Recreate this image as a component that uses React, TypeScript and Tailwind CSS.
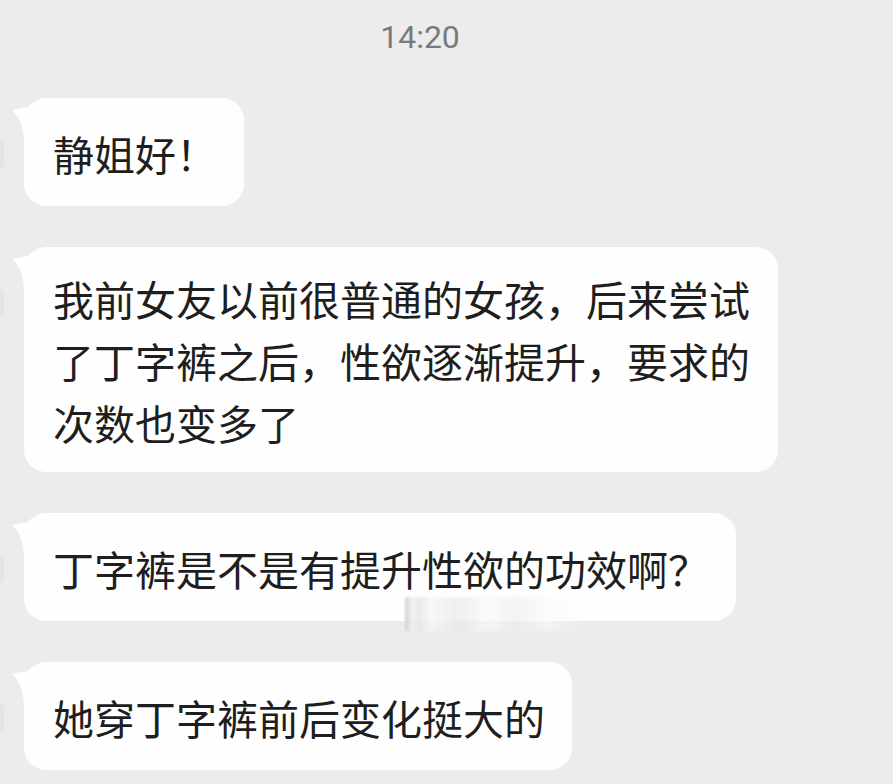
const messages = [
  { id: 1, text: '静姐好！' },
  { id: 2, text: '我前女友以前很普通的女孩，后来尝试了丁字裤之后，性欲逐渐提升，要求的次数也变多了' },
  { id: 3, text: '丁字裤是不是有提升性欲的功效啊？', smudge: true },
  { id: 4, text: '她穿丁字裤前后变化挺大的' },
];

function Tail() {
  return (
    <svg
      className="absolute left-[-12px] top-[8px]"
      width="22"
      height="36"
      viewBox="0 0 22 36"
    >
      <path d="M22 0 L3 3.2 Q0 3.8 1.5 6 Q11 14 12 36 L22 36 Z" fill="#fefefe" />
    </svg>
  );
}

function Bubble({ text, smudge }: { text: string; smudge?: boolean }) {
  return (
    <div className="relative">
      {/* avatar edge peeking in from the left */}
      <span className="absolute left-[-24px] top-[42px] h-[28px] w-[4px] rounded-r-full bg-[#e4dfd6] opacity-70 blur-[1px]" />
      <Tail />
      <div className="flex min-h-[108px] max-w-[754px] items-center rounded-[22px] bg-[#fefefe] pl-[29px] pr-[27px] pt-[20px] pb-[19px] text-[41px] leading-[62px] text-[#1e1e1e]">
        <p>{text}</p>
      </div>
      {smudge && (
        <div className="absolute left-[381px] top-[84px] h-[34px] w-[180px] bg-[linear-gradient(90deg,rgba(205,205,205,0.9)_0%,rgba(240,240,240,0.9)_4%,rgba(228,228,228,0.8)_8%,rgba(246,246,246,0.8)_14%,rgba(232,232,232,0.7)_30%,rgba(248,248,248,0.7)_45%,rgba(236,236,236,0.6)_62%,rgba(250,250,250,0.5)_80%,rgba(250,250,250,0)_100%)] blur-[1px]" />
      )}
    </div>
  );
}

export default function App() {
  return (
    <div className="min-h-screen w-full overflow-hidden bg-[#ececec] font-['Noto_Sans_CJK_SC','Noto_Sans',sans-serif]">
      <div className="w-[840px] pt-[18px] text-center font-['Roboto',sans-serif] text-[32px] leading-[38px] text-[#7a7a7a]">
        14:20
      </div>
      <div className="mt-[42px] flex flex-col items-start gap-[41px] pl-[24px]">
        {messages.map((m) => (
          <Bubble key={m.id} text={m.text} smudge={m.smudge} />
        ))}
      </div>
    </div>
  );
}
